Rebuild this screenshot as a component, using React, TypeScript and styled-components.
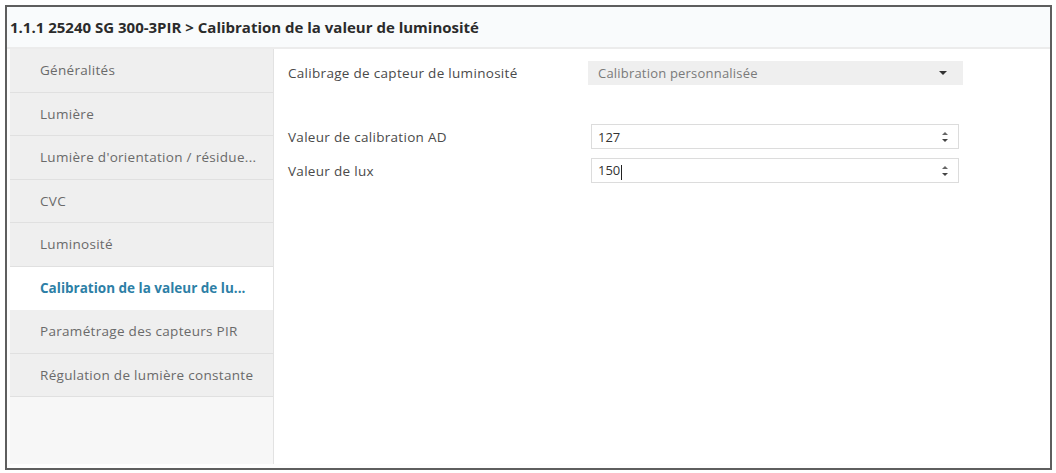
import styled, { createGlobalStyle } from "styled-components";

const GlobalStyle = createGlobalStyle`
  body {
    margin: 0;
    background: #ffffff;
    font-family: "Open Sans", "Noto Sans", sans-serif;
  }
`;

const Frame = styled.div`
  margin: 5px 4px 0 5px;
  height: 465px;
  box-sizing: border-box;
  border: 2px solid #5e5e5e;
  display: flex;
  flex-direction: column;
  background: #fdfdfd;
`;

const TitleBar = styled.div`
  height: 40px;
  flex-shrink: 0;
  display: flex;
  align-items: center;
  padding-left: 3px;
  background: #f9fbfc;
  border-bottom: 2px solid #ececec;
  color: #2b2b2b;
  font-size: 15px;
  font-weight: 700;
`;

const Body = styled.div`
  flex: 1;
  display: flex;
  padding: 0 0 4px 3px;
  min-height: 0;
`;

const Sidebar = styled.nav`
  width: 263px;
  display: flex;
  flex-direction: column;
  background: #f7f7f7;
  border-right: 1px solid #e2e2e2;
`;

const NavItem = styled.div<{ $active?: boolean }>`
  height: 43.5px;
  box-sizing: border-box;
  display: flex;
  align-items: center;
  padding-left: 30px;
  font-size: 13.5px;
  letter-spacing: ${({ $active }) => ($active ? "0" : "0.3px")};
  color: ${({ $active }) => ($active ? "#2d7fa6" : "#6a6a6a")};
  font-weight: ${({ $active }) => ($active ? 700 : 400)};
  background: ${({ $active }) => ($active ? "#ffffff" : "#efefef")};
  border-bottom: 1px solid ${({ $active }) => ($active ? "#ffffff" : "#e0e0e0")};
  white-space: nowrap;
`;

const Content = styled.main`
  flex: 1;
  padding: 12px 0 0 14px;
  background: #ffffff;
`;

const Row = styled.div<{ $gap?: number }>`
  display: flex;
  align-items: center;
  margin-top: ${({ $gap }) => $gap ?? 0}px;
`;

const Label = styled.div`
  width: 300px;
  font-size: 13.5px;
  letter-spacing: 0.3px;
  color: #4a4a4a;
`;

const Select = styled.div`
  width: 375px;
  height: 24px;
  box-sizing: border-box;
  display: flex;
  align-items: center;
  justify-content: space-between;
  padding: 0 16px 0 10px;
  background: #efefef;
  font-size: 13px;
  letter-spacing: 0.2px;
  color: #7a7a7a;
`;

const Caret = styled.span`
  width: 0;
  height: 0;
  border-left: 4px solid transparent;
  border-right: 4px solid transparent;
  border-top: 4px solid #333;
`;

const NumberBox = styled.div`
  width: 368px;
  height: 25px;
  margin-left: 3px;
  box-sizing: border-box;
  display: flex;
  align-items: center;
  justify-content: space-between;
  padding: 0 10px 0 6px;
  border: 1px solid #dcdcdc;
  background: #ffffff;
  font-size: 13px;
  color: #333;
`;

const Cursor = styled.span`
  display: inline-block;
  width: 1px;
  height: 15px;
  margin-left: 1px;
  background: #222;
  vertical-align: middle;
`;

const Spinner = styled.span`
  display: flex;
  flex-direction: column;
  gap: 4px;
`;

const Arrow = styled.span<{ $up?: boolean }>`
  width: 0;
  height: 0;
  border-left: 3px solid transparent;
  border-right: 3px solid transparent;
  ${({ $up }) =>
    $up ? "border-bottom: 3px solid #666;" : "border-top: 3px solid #444;"}
`;

const navItems = [
  "Généralités",
  "Lumière",
  "Lumière d'orientation / résidue...",
  "CVC",
  "Luminosité",
  "Calibration de la valeur de lu...",
  "Paramétrage des capteurs PIR",
  "Régulation de lumière constante",
];

const App = () => {
  return (
    <>
      <GlobalStyle />
      <Frame>
        <TitleBar>1.1.1 25240 SG 300-3PIR &gt; Calibration de la valeur de luminosité</TitleBar>
        <Body>
          <Sidebar>
            {navItems.map((name, i) => (
              <NavItem key={i} $active={i === 5}>
                {name}
              </NavItem>
            ))}
          </Sidebar>
          <Content>
            <Row>
              <Label>Calibrage de capteur de luminosité</Label>
              <Select>
                Calibration personnalisée
                <Caret />
              </Select>
            </Row>
            <Row $gap={39}>
              <Label>Valeur de calibration AD</Label>
              <NumberBox>
                127
                <Spinner>
                  <Arrow $up />
                  <Arrow />
                </Spinner>
              </NumberBox>
            </Row>
            <Row $gap={9}>
              <Label>Valeur de lux</Label>
              <NumberBox>
                <span>
                  150
                  <Cursor />
                </span>
                <Spinner>
                  <Arrow $up />
                  <Arrow />
                </Spinner>
              </NumberBox>
            </Row>
          </Content>
        </Body>
      </Frame>
    </>
  );
};

export default App;
